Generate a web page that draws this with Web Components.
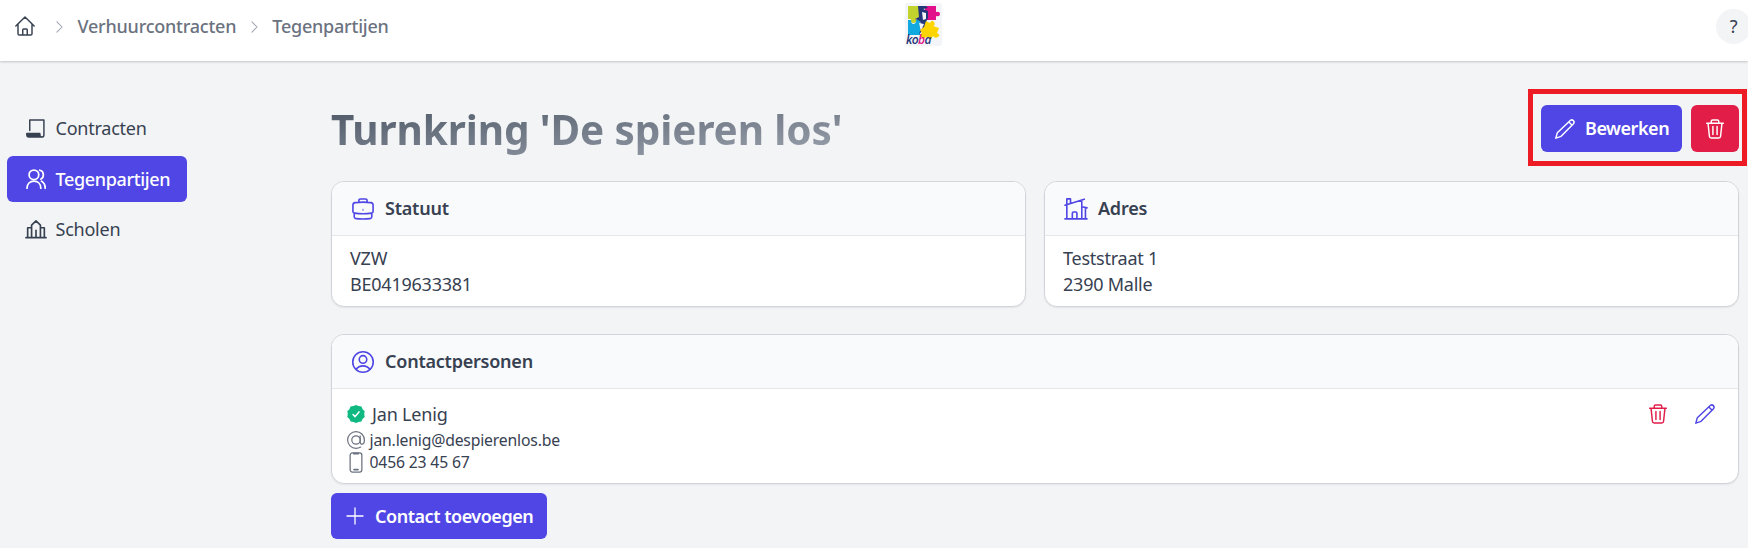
<!DOCTYPE html>
<html lang="nl"><head><meta charset="utf-8"><title>Tegenpartijen</title>
<style>html,body{margin:0;height:100%;overflow:hidden}body{font:18px/27px "Noto Sans",sans-serif;letter-spacing:-.23px;color:#374151;background:#f3f4f6}</style></head>
<body><contract-page></contract-page>
<script>
const ICONS={
home:'<path d="M1 12 12 1.200 23 12M3.600 10v11.200c0 1 .6 1.600 1.600 1.600h13.600c1 0 1.600-.6 1.600-1.600V10M9.300 22.500v-6c0-.6.4-1 1-1h3.400c.6 0 1 .4 1 1v6"/>',
chevron:'<path d="m1 1 6 6-6 6"/>',
scroll:'<path d="M4.500 15V2.300h17v18c0 1.700-1 2.500-2.300 2.500H3.500C2 22.800 1 22 1 20v-1.500h15.500V20c0 1.500 1 2.500 2 2.500"/><path d="M1.500 19.200h14.800v2.600H2z" fill="currentColor"/>',
users:'<circle cx="9.500" cy="7" r="5.800"/><path d="M1.200 23c0-5.200 3.500-8.500 8.300-8.500s8.300 3.300 8.300 8.500M16.500 1.500c5.500.8 5.500 8.500 1.400 10.500M18.500 14.500c2.900 1.700 4.500 4.500 4.500 8.500"/>',
school:'<path d="M0 22.400h24M6.700 22V7.300L12 2.300l5.300 5V22M2 22V10.500h4.500M22 22V10.500h-4.500M12 13.500V22"/>',
pencil:'<path d="m1 23 1.800-6.600L18.300 1.800c2.600-2.100 6 1.200 3.900 3.900L7.300 20.800zM16.600 3.500l4 4"/>',
trash:'<path d="M2 5.200h20M7.500 5V2.800c0-1 .8-1.600 1.700-1.600h5.600c.9 0 1.700.6 1.700 1.600V5M3.700 5.500l1.600 15.200c.1 1.300 1 2.100 2.200 2.100h9c1.200 0 2.100-.8 2.200-2.100l1.600-15.200M9.500 9v9.500M14.500 9v9.500"/>',
brief:'<path d="M7.500 4.500V2.800c0-1.100.7-1.700 1.700-1.700h5.600c1 0 1.700.6 1.700 1.700v1.700M3.500 5Q12 4 20.500 5c1.600.2 2.500 1 2.500 2.600v7c0 1-.7 1.700-1.800 1.900q-9.200 1.500-18.400 0C1.700 16.300 1 15.600 1 14.600v-7C1 6 1.900 5.200 3.500 5zM2.400 16.500v4c0 1.200.7 1.900 1.900 2q7.700.8 15.400 0c1.200-.1 1.900-.8 1.900-2v-4"/><circle cx="12" cy="12.700" r=".2"/>',
house:'<path d="M0 22.800h24M2 22.500V7.400M0 7.900 21 1.300M2 7V1h4v4.500M18.300 2.500v20M18.500 9.500l5.500 1.300M22.300 10.500v12M8 22.500v-6c0-.8.600-1.300 1.300-1.300h2.400c.8 0 1.300.5 1.300 1.300v6"/>',
user:'<circle cx="12" cy="12" r="11.200"/><circle cx="12" cy="9.200" r="4.100"/><path d="M4.500 20c2-2.800 4.500-3.800 7.500-3.800s5.500 1 7.500 3.800"/>',
check:'<path fill="#10b981" stroke="none" d="m12 0 3.400 1.400 3.900.5 1.500 3.600 2.800 2.700-.6 3.800.6 3.900-2.900 2.700-1.500 3.500-3.800.5L12 24l-3.400-1.400-3.800-.5-1.500-3.500-2.900-2.700L1 12 .4 8.200l2.800-2.700 1.500-3.600 3.900-.5z"/><path stroke="#fff" stroke-width="2" d="m8 12.700 2.800 2.800 5.200-6.300"/>',
at:'<circle cx="12" cy="12" r="5.600"/><path d="M17.600 6.500v8c0 4.600 5.600 4 5.600-2C23.200 5.500 18.200.8 12 .8S.8 5.800.8 12 5.800 23.200 12 23.200c2.500 0 4.500-.7 6.300-1.800"/>',
phone:'<rect x="1" y="1" width="12" height="19.500" rx="2.300"/><path d="M4.600 1.600h4.800M5 18h4" stroke-width="1.800"/>',
plus:'<path d="M8 0v16M0 8h16"/>'};
const BOX={chevron:'0 0 8 14',phone:'0 0 14 21.500',plus:'0 0 16 16'};
function define(name,html){const t=document.createElement('template');t.innerHTML=html;
customElements.define(name,class extends HTMLElement{constructor(){super();this.attachShadow({mode:'open'}).append(t.content.cloneNode(true))}})}
customElements.define('ui-icon',class extends HTMLElement{connectedCallback(){const n=this.getAttribute('name'),r=this.shadowRoot||this.attachShadow({mode:'open'});
r.innerHTML=`<style>:host{display:block;flex:none;width:20px;height:20px}svg{display:block;width:100%;height:100%;overflow:visible}</style><svg viewBox="${BOX[n]||'0 0 24 24'}" fill="none" stroke="currentColor" stroke-width="${this.getAttribute('w')||1.75}" stroke-linejoin="round" stroke-linecap="round">${ICONS[n]}</svg>`}});
define('koba-logo',`<style>:host{display:block;width:37px;height:43px}svg{display:block}text{font:italic 600 12px "Open Sans",sans-serif;letter-spacing:0}</style>
<svg width="37" height="43" viewBox="0 0 37 43"><rect width="37" height="43" rx="2" fill="#f4f5f8"/>
<path fill="#c3d32d" d="M3 3h11v13h-3q1 4-2.500 4T6 16H3z"/><path fill="#e2108b" d="M20 3h11v6q4-1 4 2t-4 2v4H20z"/>
<path fill="#12a9e0" d="M3 17h3q0 4 2.500 4T11 17h4v15H3z"/>
<path fill="#243779" d="M13 3h8l2 2-5 1 5 2v7l-2 4-1 7-6 5q3-7 1-13l-5-2 4-2z"/>
<path fill="#f5f5fa" d="m17 9 4 1v6l-3 1zM14 20l5 1-3 7z"/>
<path fill="#ffd500" d="m21 18 4 2q2-4 4-1t-1 4l6 2-2 5q4 2 1 4t-5-1l-2 3-5-2q-3 3-5 0t1-4l-2-3 4-3z"/>
<text x="1" y="41" fill="#243779" textLength="25.500">ko<tspan fill="#e2108b">b</tspan>a</text></svg>`);
define('top-bar',`<style>:host{display:grid;grid-template-columns:905px 37px 1fr;height:61px;background:#fff;box-shadow:0 1px 3px #0000001a,0 1px 2px #0000001a;position:relative;box-sizing:border-box}
nav{display:flex;align-items:center;height:53px;padding-left:15px;font-weight:500;color:#6b7280}nav ui-icon{color:#9ca3af;width:7px;height:12px}nav .h{color:#374151;width:20px;height:20px;margin-right:21px}.a{margin:0 14px 0 15px}nav .h+.a{margin:0 14.500px 0 0}nav .h{margin-top:-1px}
koba-logo{margin-top:3px}.q{justify-self:end;margin:9px -3px 0 0;width:35px;height:35px;border-radius:50%;background:#f3f4f6;display:flex;align-items:center;justify-content:center}</style>
<nav><ui-icon class="h" name="home"></ui-icon><ui-icon class="a" name="chevron" w="1.200"></ui-icon><span>Verhuurcontracten</span><ui-icon class="a" name="chevron" w="1.200"></ui-icon><span>Tegenpartijen</span></nav><koba-logo></koba-logo><div class="q">?</div>`);
define('side-item',`<style>:host{display:flex;align-items:center;gap:9.500px;height:46px;width:180px;padding-left:19px;box-sizing:border-box;border-radius:6px}:host([active]){background:#4f46e5;color:#fff;font-weight:500;letter-spacing:-.35px;padding-top:1px}</style><slot></slot>`);
define('ui-button',`<style>:host{display:flex;align-items:center;box-sizing:border-box;height:46px;border-radius:6px;background:#4f46e5;color:#fff;font-weight:600;letter-spacing:-.47px;padding:0 13px 0 14px;gap:10px;white-space:nowrap}:host([danger]){background:#e11d48;padding:0;justify-content:center;width:48px}</style><slot></slot>`);
define('ui-card',`<style>:host{display:block;box-sizing:border-box;border:1px solid #d1d5db;border-radius:13px;background:#fff;overflow:hidden;box-shadow:0 1px 2px #0001}header{display:flex;align-items:center;gap:11px;height:53px;padding-left:20px;background:#f9fafb;border-bottom:1px solid #e5e7eb;font-weight:600}</style>
<header><slot name="icon"></slot><slot name="title"></slot></header><slot></slot>`);
define('contact-row',`<style>:host{display:flex;justify-content:space-between;padding:12px 23px 0 15px}.l{display:flex;align-items:center;height:22px;font-size:15.750px;letter-spacing:-.18px;gap:4.500px}.n{height:26px;font-size:18px;gap:7px;margin-bottom:2px}.l ui-icon{width:18px;height:18px;color:#6b7280}.l .p{width:14px;height:21px;margin:0 2px}.act{display:flex;gap:27.500px;padding-top:3px}</style>
<div><div class="l n"><ui-icon name="check"></ui-icon><span>Jan Lenig</span></div><div class="l"><ui-icon name="at" w="1.600"></ui-icon><span>jan.lenig@despierenlos.be</span></div><div class="l"><ui-icon class="p" name="phone" w="1.300"></ui-icon><span>0456 23 45 67</span></div></div>
<div class="act"><ui-icon name="trash" style="color:#e11d48"></ui-icon><ui-icon name="pencil" style="color:#4f46e5"></ui-icon></div>`);
define('contract-page',`<style>:host{display:block}.body{display:grid;grid-template-columns:324px 1408px;padding-left:7px}aside{padding-top:44px;display:grid;gap:4.500px;align-content:start}
.head{display:flex;justify-content:space-between;height:120px;box-sizing:border-box;padding-top:28px}h1{margin:14px 0 0;height:54px;font-size:40.500px;line-height:54px;letter-spacing:-.1px;font-weight:700;color:transparent;background:linear-gradient(to bottom right,#4b5563,#9ca3af);background-clip:text;-webkit-background-clip:text}
.mark{display:flex;gap:9px;box-sizing:border-box;width:219px;height:77px;border:5px solid #ed1c24;padding:11px 0 0 8px;margin-right:-8px}.mark ui-button{height:47px}.mark ui-button:first-child{width:141px}
.two{display:grid;grid-template-columns:1fr 1fr;gap:18px;margin-bottom:27px}.two ui-card{height:126px}.txt{padding:9px 18px;line-height:26px}.ci{width:22px;height:22px;color:#4f46e5}.add{width:216px;margin-top:9px;padding-left:16px;gap:12px}.add ui-icon{width:16px;height:16px}</style>
<top-bar></top-bar><div class="body"><aside><side-item><ui-icon name="scroll"></ui-icon>Contracten</side-item><side-item active><ui-icon name="users" w="2.100"></ui-icon>Tegenpartijen</side-item><side-item><ui-icon name="school" w="2"></ui-icon>Scholen</side-item></aside>
<main><div class="head"><h1>Turnkring 'De spieren los'</h1><div class="mark"><ui-button><ui-icon name="pencil"></ui-icon>Bewerken</ui-button><ui-button danger><ui-icon name="trash"></ui-icon></ui-button></div></div>
<div class="two"><ui-card><ui-icon class="ci" slot="icon" name="brief"></ui-icon><span slot="title">Statuut</span><div class="txt">VZW<br>BE0419633381</div></ui-card><ui-card><ui-icon class="ci" slot="icon" name="house"></ui-icon><span slot="title">Adres</span><div class="txt">Teststraat 1<br>2390 Malle</div></ui-card></div>
<ui-card style="height:150px"><ui-icon class="ci" slot="icon" name="user"></ui-icon><span slot="title">Contactpersonen</span><contact-row></contact-row></ui-card>
<ui-button class="add"><ui-icon name="plus" w="1.300"></ui-icon>Contact toevoegen</ui-button></main></div>`);
</script></body></html>
